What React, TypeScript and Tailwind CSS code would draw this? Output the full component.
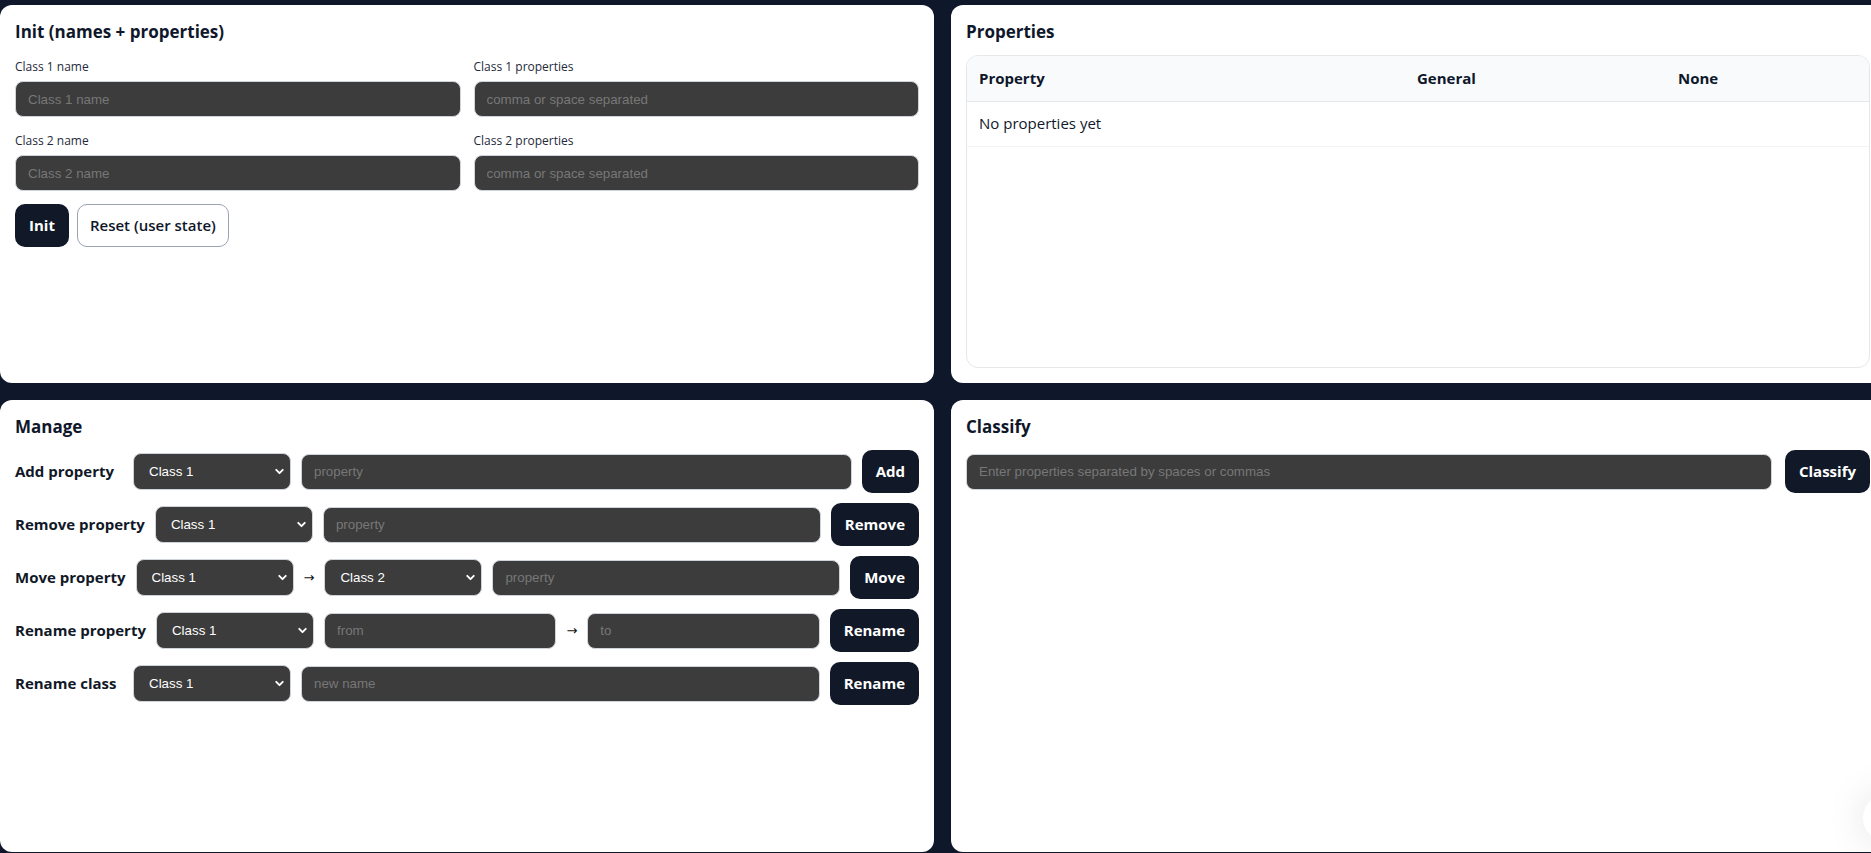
import React from 'react';
import { ChevronDown } from 'lucide-react';

const inputCls =
  "h-[36px] min-w-0 rounded-[8px] border border-[#cfd3da] bg-[#3c3c3c] px-[12px] font-['Liberation_Sans',Arial,sans-serif] text-[13.33px] text-white placeholder:text-[#777777] outline-none";

const btnCls =
  'h-[43px] shrink-0 rounded-[10px] bg-[#111827] px-[14px] text-[15px] font-bold text-white';

const ClassSelect: React.FC<{ value: string }> = ({ value }) => (
  <div className="relative w-[158px] shrink-0">
    <select
      defaultValue={value}
      className="h-[37px] w-full appearance-none rounded-[8px] border border-[#cfd3da] bg-[#3c3c3c] pl-[15px] font-['Liberation_Sans',Arial,sans-serif] text-[13.33px] text-white outline-none"
    >
      <option>Class 1</option>
      <option>Class 2</option>
    </select>
    <ChevronDown
      className="pointer-events-none absolute right-[5px] top-[12px] h-[13px] w-[13px] text-white"
      strokeWidth={3.5}
    />
  </div>
);

const Arrow = () => (
  <span className="shrink-0 font-['DejaVu_Sans',sans-serif] text-[13px] text-[#111]">→</span>
);

const Row: React.FC<{ label: string; children: React.ReactNode }> = ({ label, children }) => (
  <div className="flex h-[43px] items-center gap-[10px]">
    <span className="min-w-[108px] shrink-0 whitespace-nowrap text-[15px] font-bold text-[#111827]">{label}</span>
    {children}
  </div>
);

const Panel: React.FC<{ title: string; children: React.ReactNode }> = ({ title, children }) => (
  <section className="flex flex-col rounded-[12px] bg-white p-[15px]">
    <h2 className="text-[17px] leading-[24px] font-bold text-[#0f172a]">{title}</h2>
    {children}
  </section>
);

const Field: React.FC<{ label: string; placeholder: string }> = ({ label, placeholder }) => (
  <div className="flex flex-col">
    <label className="text-[12px] leading-[16px] text-[#1e293b]">{label}</label>
    <input className={inputCls + ' mt-[6px] h-[35px]'} placeholder={placeholder} />
  </div>
);

export default function App() {
  return (
    <div className="relative h-[853px] w-[1871px] overflow-hidden bg-[#0f172a] font-['Open_Sans','Noto_Sans',sans-serif]">
      <div className="grid w-[1885px] grid-cols-[934px_934px] grid-rows-[378px_452px] gap-[17px] pt-[5px]">
        <Panel title="Init (names + properties)">
          <div className="mt-[15px] grid grid-cols-2 gap-x-[13px] gap-y-[16px]">
            <Field label="Class 1 name" placeholder="Class 1 name" />
            <Field label="Class 1 properties" placeholder="comma or space separated" />
            <Field label="Class 2 name" placeholder="Class 2 name" />
            <Field label="Class 2 properties" placeholder="comma or space separated" />
          </div>
          <div className="mt-[13px] flex gap-[8px]">
            <button className="h-[43px] rounded-[10px] bg-[#111827] px-[14px] text-[15px] font-bold text-white">Init</button>
            <button className="h-[43px] rounded-[10px] border border-[#9aa3b2] bg-white px-[12px] text-[15px] font-semibold text-[#0f172a]">
              Reset (user state)
            </button>
          </div>
        </Panel>

        <Panel title="Properties">
          <div className="mt-[11px] flex-1 overflow-hidden rounded-[12px] border border-[#e5e7eb]">
            <table className="w-full table-fixed border-collapse text-left text-[15px] text-[#0f172a]">
              <colgroup>
                <col className="w-[438px]" />
                <col className="w-[261px]" />
                <col />
              </colgroup>
              <thead>
                <tr className="h-[45px] border-b border-[#e5e7eb] bg-[#f8fafc]">
                  <th className="px-[12px] font-bold">Property</th>
                  <th className="px-[12px] font-bold">General</th>
                  <th className="px-[12px] font-bold">None</th>
                </tr>
              </thead>
              <tbody>
                <tr className="h-[45px] border-b border-[#f1f3f6]">
                  <td colSpan={3} className="px-[12px]">No properties yet</td>
                </tr>
              </tbody>
            </table>
          </div>
        </Panel>

        <Panel title="Manage">
          <div className="mt-[11px] flex flex-col gap-[10px]">
            <Row label="Add property">
              <ClassSelect value="Class 1" />
              <input className={inputCls + ' flex-1'} placeholder="property" />
              <button className={btnCls}>Add</button>
            </Row>
            <Row label="Remove property">
              <ClassSelect value="Class 1" />
              <input className={inputCls + ' flex-1'} placeholder="property" />
              <button className={btnCls}>Remove</button>
            </Row>
            <Row label="Move property">
              <ClassSelect value="Class 1" />
              <Arrow />
              <ClassSelect value="Class 2" />
              <input className={inputCls + ' flex-1'} placeholder="property" />
              <button className={btnCls}>Move</button>
            </Row>
            <Row label="Rename property">
              <ClassSelect value="Class 1" />
              <input className={inputCls + ' flex-1'} placeholder="from" />
              <Arrow />
              <input className={inputCls + ' flex-1'} placeholder="to" />
              <button className={btnCls}>Rename</button>
            </Row>
            <Row label="Rename class">
              <ClassSelect value="Class 1" />
              <input className={inputCls + ' flex-1'} placeholder="new name" />
              <button className={btnCls}>Rename</button>
            </Row>
          </div>
        </Panel>

        <Panel title="Classify">
          <div className="mt-[11px] flex items-center gap-[13px]">
            <input className={inputCls + ' flex-1'} placeholder="Enter properties separated by spaces or commas" />
            <button className={btnCls}>Classify</button>
          </div>
        </Panel>
      </div>
      <div className="absolute bottom-[11px] right-[-40px] h-[48px] w-[48px] rounded-full bg-white shadow-[0_0_40px_rgba(15,23,42,0.12)]" />
    </div>
  );
}
